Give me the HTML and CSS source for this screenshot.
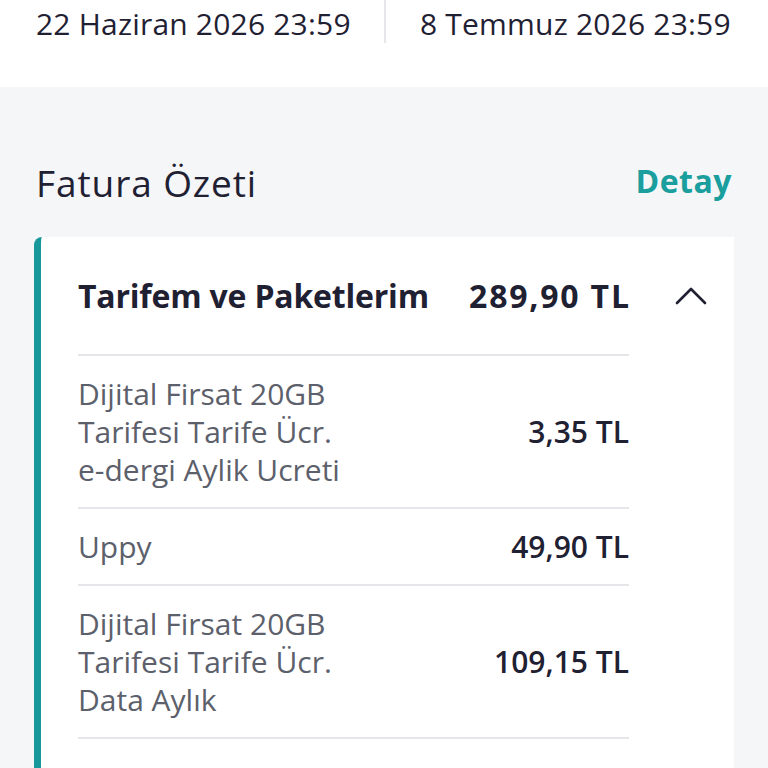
FILE: index.html
```html
<!DOCTYPE html>
<html lang="tr">
<head>
    <meta charset="UTF-8">
    <meta name="viewport" content="width=device-width, initial-scale=1.0">
    <title>Fatura Özeti</title>
    <link rel="stylesheet" href="styles.css">
</head>
<body>
    <div class="dates">
        <div class="date">22 Haziran 2026 23:59</div>
        <div class="date second">8 Temmuz 2026 23:59</div>
    </div>
    <div class="summary">
        <div class="summary-head">
            <h2>Fatura Özeti</h2>
            <a href="#" class="detail">Detay</a>
        </div>
        <div class="card">
            <div class="card-head">
                <span class="card-title">Tarifem ve Paketlerim</span>
                <span class="card-total">289,90 TL</span>
                <span class="toggle">
                    <svg width="32" height="20" viewBox="0 0 32 20">
                        <path d="M2 17 L16 3 L30 17" fill="none" stroke="#1f2133" stroke-width="2.6" stroke-linecap="round" stroke-linejoin="round"/>
                    </svg>
                </span>
            </div>
            <div class="items">
                <div class="item">
                    <div class="item-name">Dijital Firsat 20GB<br>Tarifesi Tarife Ücr.<br>e-dergi Aylik Ucreti</div>
                    <div class="item-price">3,35 TL</div>
                </div>
                <div class="item">
                    <div class="item-name">Uppy</div>
                    <div class="item-price">49,90 TL</div>
                </div>
                <div class="item">
                    <div class="item-name">Dijital Firsat 20GB<br>Tarifesi Tarife Ücr.<br>Data Aylık</div>
                    <div class="item-price">109,15 TL</div>
                </div>
            </div>
        </div>
    </div>
</body>
</html>
```

FILE: styles.css
```css
*{
    margin: 0;
    padding: 0;
    box-sizing: border-box;
}
body{
    background-color: #f5f6f8;
    font-family: "Open Sans", Lato, sans-serif;
    color: #1f2133;
    overflow: hidden;
}
.dates{
    background-color: white;
    height: 87px;
    display: flex;
}
.date{
    width: 50%;
    padding-left: 36px;
    font-size: 30px;
    letter-spacing: 0.2px;
    line-height: 48px;
    height: 48px;
    color: #1f2133;
}
.second{
    position: relative;
}
.second::before{
    content: "";
    position: absolute;
    left: 0;
    top: 0;
    width: 2px;
    height: 43px;
    background-color: #e6e7ea;
}
.summary{
    padding: 0 34px 0;
}
.summary-head{
    display: flex;
    justify-content: space-between;
    align-items: center;
    height: 150px;
    padding: 40px 2px 0;
}
.summary-head h2{
    font-weight: 400;
    font-size: 37px;
    letter-spacing: 0.9px;
    color: #1f2133;
}
.detail{
    color: #1a9e9e;
    font-weight: 700;
    font-size: 32px;
    letter-spacing: 0.5px;
    text-decoration: none;
    padding-bottom: 4px;
}
.card{
    background-color: white;
    border-left: 7px solid #17989b;
    border-top-left-radius: 8px;
    padding-left: 37px;
    padding-bottom: 60px;
}
.card-head{
    display: flex;
    align-items: center;
    height: 117px;
    padding-right: 27px;
}
.card-title{
    flex: 1;
    font-size: 32px;
    font-weight: 700;
    letter-spacing: -0.2px;
}
.card-total{
    font-size: 32px;
    font-weight: 700;
    letter-spacing: 1.8px;
    margin-right: -1.8px;
}
.toggle{
    margin-left: 46px;
    width: 32px;
    height: 20px;
    display: flex;
}
.items{
    width: 551px;
}
.item{
    display: flex;
    align-items: center;
    justify-content: space-between;
    border-top: 2px solid #e5e6e9;
    padding: 19px 0 18px;
}
.item:last-child{
    border-bottom: 2px solid #e5e6e9;
}
.item-name{
    font-size: 30px;
    line-height: 38px;
    color: #5c606b;
}
.item-price{
    font-size: 30px;
    line-height: 38px;
    font-weight: 600;
    color: #1f2133;
}
```
